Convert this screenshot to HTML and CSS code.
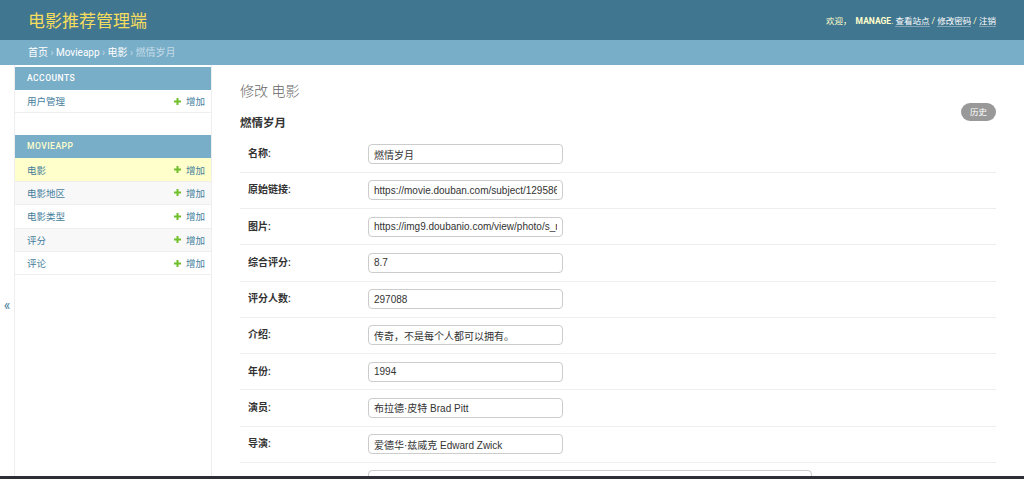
FILE: index.html
```html
<!DOCTYPE html>
<html lang="zh">
<head>
<meta charset="utf-8">
<title>修改 电影 | 电影推荐管理端</title>
<link rel="stylesheet" href="styles.css">
</head>
<body>
<div class="header">
  <div class="branding">电影推荐管理端</div>
  <div class="user-tools">欢迎， <strong>MANAGE</strong>. <a>查看站点</a> / <a>修改密码</a> / <a>注销</a></div>
</div>
<div class="breadcrumbs"><a>首页</a> › <a>Movieapp</a> › <a>电影</a> › <span class="cur">燃情岁月</span></div>
<div class="main">
  <div class="toggle"><span>«</span></div>
  <nav class="sidebar">
    <div class="module">
      <div class="caption">Accounts</div>
      <div class="row"><a class="model">用户管理</a><a class="add"><svg width="7" height="7" viewBox="0 0 7 7"><path d="M3.5 0v7M0 3.5h7" stroke="#70bf2b" stroke-width="2"/></svg>增加</a></div>
    </div>
    <div class="module current-app">
      <div class="caption">Movieapp</div>
      <div class="row current"><a class="model">电影</a><a class="add"><svg width="7" height="7" viewBox="0 0 7 7"><path d="M3.5 0v7M0 3.5h7" stroke="#70bf2b" stroke-width="2"/></svg>增加</a></div>
      <div class="row alt"><a class="model">电影地区</a><a class="add"><svg width="7" height="7" viewBox="0 0 7 7"><path d="M3.5 0v7M0 3.5h7" stroke="#70bf2b" stroke-width="2"/></svg>增加</a></div>
      <div class="row"><a class="model">电影类型</a><a class="add"><svg width="7" height="7" viewBox="0 0 7 7"><path d="M3.5 0v7M0 3.5h7" stroke="#70bf2b" stroke-width="2"/></svg>增加</a></div>
      <div class="row alt"><a class="model">评分</a><a class="add"><svg width="7" height="7" viewBox="0 0 7 7"><path d="M3.5 0v7M0 3.5h7" stroke="#70bf2b" stroke-width="2"/></svg>增加</a></div>
      <div class="row"><a class="model">评论</a><a class="add"><svg width="7" height="7" viewBox="0 0 7 7"><path d="M3.5 0v7M0 3.5h7" stroke="#70bf2b" stroke-width="2"/></svg>增加</a></div>
    </div>
  </nav>
  <div class="content">
    <h1>修改 电影</h1>
    <div class="title-row"><h2>燃情岁月</h2><a class="history">历史</a></div>
    <div class="form">
      <div class="form-row"><label>名称:</label><input class="field" value="燃情岁月"></div>
      <div class="form-row"><label>原始链接:</label><input class="field" value="https://movie.douban.com/subject/1295865/"></div>
      <div class="form-row"><label>图片:</label><input class="field" value="https://img9.doubanio.com/view/photo/s_ratio_poster/public/p1023654037.jpg"></div>
      <div class="form-row"><label>综合评分:</label><input class="field" value="8.7"></div>
      <div class="form-row"><label>评分人数:</label><input class="field" value="297088"></div>
      <div class="form-row"><label>介绍:</label><input class="field" value="传奇，不是每个人都可以拥有。"></div>
      <div class="form-row"><label>年份:</label><input class="field" value="1994"></div>
      <div class="form-row"><label>演员:</label><input class="field" value="布拉德·皮特 Brad Pitt"></div>
      <div class="form-row"><label>导演:</label><input class="field" value="爱德华·兹威克 Edward Zwick"></div>
      <div class="form-row"><span class="label-space"></span><textarea class="area"></textarea></div>
    </div>
  </div>
</div>
<div class="screen-edge"></div>
</body>
</html>
```
FILE: styles.css
```css
html, body {
  margin: 0;
  padding: 0;
  background: #fff;
  font-family: Roboto, "Noto Sans CJK SC", sans-serif;
  color: #333;
  overflow: hidden;
  height: 479px;
}
a { text-decoration: none; }

.header {
  height: 40px;
  background: #417690;
  display: flex;
  align-items: center;
  justify-content: space-between;
  padding: 0 28px;
}
.branding {
  color: #f5dd5d;
  font-size: 17px;
  font-weight: 400;
  margin-top: -2px;
}
.user-tools {
  color: #ffc;
  font-size: 8.5px;
}
.user-tools strong {
  font-weight: 700;
  color: #ffc;
  margin-left: 2px;
}
.user-tools a {
  color: #fff;
  border-bottom: 1px solid rgba(255,255,255,0.35);
}

.breadcrumbs {
  height: 25px;
  line-height: 26px;
  background: #79aec8;
  color: #c4dce8;
  font-size: 10px;
  padding: 0 28px;
}
.breadcrumbs a { color: #fff; }

.main {
  display: flex;
  height: 414px;
}
.toggle {
  width: 15px;
  flex-shrink: 0;
  border-right: 1px solid #eee;
  display: flex;
  justify-content: center;
  padding-top: 233px;
  color: #447e9b;
  font-size: 14px;
  line-height: 14px;
  box-sizing: border-box;
}
.sidebar {
  width: 196px;
  border-right: 1px solid #eee;
  padding-top: 2px;
  flex-shrink: 0;
}
.module { margin-bottom: 22px; }
.caption {
  height: 23px;
  line-height: 23px;
  background: #79aec8;
  color: #fff;
  text-transform: uppercase;
  font-size: 8.5px;
  letter-spacing: 0.5px;
  padding-left: 12px;
  font-weight: 500;
}
.current-app .caption { color: #ffc; }
.row {
  height: 22.4px;
  border-bottom: 1px solid #eee;
  display: flex;
  align-items: center;
  justify-content: space-between;
  padding: 0 6px 0 12px;
  font-size: 9.5px;
  background: #fff;
}
.row.alt { background: #f8f8f8; }
.row.current { background: #ffc; }
.row a { color: #447e9b; }
.add {
  display: flex;
  align-items: center;
  gap: 5px;
}

.content {
  flex: 1;
  padding: 17px 28px 0;
  min-width: 0;
}
h1 {
  margin: 0;
  font-size: 14px;
  line-height: 18px;
  font-weight: 300;
  color: #666;
}
.title-row {
  display: flex;
  justify-content: space-between;
  align-items: flex-start;
  margin-top: 3px;
}
h2 {
  margin: 13px 0 6.5px;
  font-size: 11.5px;
  line-height: 14px;
  font-weight: 700;
  color: #333;
}
.history {
  display: block;
  width: 35px;
  height: 18px;
  line-height: 18px;
  text-align: center;
  border-radius: 9px;
  background: #999;
  color: #fff;
  font-size: 8.5px;
}
.form-row {
  display: flex;
  align-items: flex-start;
  padding: 7.625px 0 7.625px 8px;
  border-bottom: 1px solid #eee;
}
.form-row label, .label-space {
  width: 120px;
  flex-shrink: 0;
  font-size: 10px;
  font-weight: 600;
  color: #333;
  line-height: 20px;
}
.field {
  width: 195px;
  height: 20px;
  box-sizing: border-box;
  border: 1px solid #ccc;
  border-radius: 4px;
  padding: 0 5px;
  font-family: "Liberation Sans", "Noto Sans CJK SC", sans-serif;
  font-size: 10px;
  color: #333;
  outline: none;
}
.area {
  width: 444px;
  height: 60px;
  box-sizing: border-box;
  border: 1px solid #ccc;
  border-radius: 4px;
  resize: none;
}
.screen-edge {
  position: fixed;
  left: 0;
  right: 0;
  bottom: 0;
  height: 3px;
  background: #2b2f33;
}
```
